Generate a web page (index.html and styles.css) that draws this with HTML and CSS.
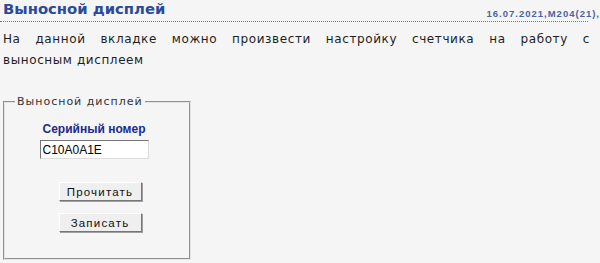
FILE: index.html
```html
<!DOCTYPE html>
<html lang="ru">
<head>
<meta charset="utf-8">
<title>Выносной дисплей</title>
<link rel="stylesheet" href="styles.css">
</head>
<body>
<div class="page">
  <div class="head">
    <h1 class="title">Выносной дисплей</h1>
    <span class="date">16.07.2021,M204(21),</span>
  </div>
  <p class="intro">На данной вкладке можно произвести настройку счетчика на работу с выносным&nbsp;дисплеем</p>
  <fieldset class="box">
    <legend class="legend">Выносной дисплей</legend>
    <div class="field">
      <div class="label">Серийный номер</div>
      <input class="serial" type="text" value="C10A0A1E">
    </div>
    <div class="actions">
      <button class="btn" type="button">Прочитать</button>
      <button class="btn" type="button">Записать</button>
    </div>
  </fieldset>
</div>
</body>
</html>
```

FILE: styles.css
```css
html, body {
  margin: 0;
  padding: 0;
  background: #f5f5f5;
}
body {
  font-family: "DejaVu Sans", Verdana, sans-serif;
  color: #1e1e1e;
}
.page {
  padding: 0 0 0 3px;
}
.head {
  display: flex;
  align-items: flex-end;
  justify-content: space-between;
  width: 588px;
  margin-left: -3px;
  padding-left: 3px;
  height: 22px;
  border-bottom: 1px dotted #777;
  box-sizing: border-box;
}
.title {
  margin: 0 0 3px 0;
  font-size: 14.8px;
  font-weight: bold;
  line-height: 18px;
  color: #2b4a98;
}
.date {
  font-family: "Liberation Sans", Arial, sans-serif;
  font-size: 9.5px;
  font-weight: bold;
  color: #4a63a8;
  line-height: 10px;
  margin-right: -12px;
  padding-bottom: 2px;
  letter-spacing: 1px;
  white-space: nowrap;
}
.intro {
  margin: 7px 0 0 0;
  width: 587px;
  font-size: 12px;
  line-height: 21px;
  letter-spacing: 0.6px;
  text-align: justify;
  color: #1e1e1e;
}
.box {
  margin: 24px 0 0 0;
  width: 188px;
  box-sizing: border-box;
  padding: 14px 0 26px 0;
  border: 2px groove #e4e4e4;
  display: flex;
  flex-direction: column;
  align-items: center;
}
.legend {
  margin-left: 10px;
  padding: 0 2px;
  font-size: 11px;
  letter-spacing: 1px;
  color: #333;
}
.field {
  display: flex;
  flex-direction: column;
  align-items: center;
  margin-right: 6px;
}
.label {
  font-family: "Liberation Sans", Arial, sans-serif;
  font-weight: bold;
  font-size: 12px;
  color: #1c2a8c;
  line-height: 15px;
  margin-bottom: 3px;
}
.serial {
  width: 109px;
  height: 19px;
  box-sizing: border-box;
  padding: 0 2px;
  margin: 0;
  font-family: "Liberation Sans", Arial, sans-serif;
  font-size: 12px;
  color: #000;
  background: #fff;
  border: 1px solid #a0a0a0;
  border-color: #767676 #dcdcdc #dcdcdc #767676;
  outline: none;
}
.actions {
  display: flex;
  flex-direction: column;
  align-items: center;
  gap: 12px;
  margin-top: 23px;
  margin-left: 6px;
}
.btn {
  width: 83px;
  height: 19px;
  box-sizing: border-box;
  padding: 0;
  font-family: "Liberation Sans", Arial, sans-serif;
  font-size: 11.5px;
  letter-spacing: 1.2px;
  color: #111;
  background: #efefef;
  border: 1px solid;
  border-color: #fff #777 #777 #fff;
  box-shadow: 1px 1px 0 #a0a0a0;
}
```
